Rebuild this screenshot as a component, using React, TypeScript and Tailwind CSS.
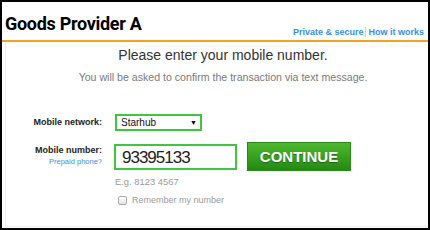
import React from "react";

export default function App() {
  const sans = { fontFamily: '"Liberation Sans", Arial, sans-serif' };
  return (
    <div
      className="w-[430px] h-[230px] border-2 border-black bg-white flex flex-col overflow-hidden"
      style={sans}
    >
      {/* header */}
      <div className="h-[40px] flex items-end justify-between pl-[3px] pr-[4px] border-b-2 border-[#f5a31e] shrink-0">
        <div
          className="text-[18px] font-bold text-black leading-none pb-[7px] tracking-[-0.3px]"
          style={{ fontFamily: 'Roboto, "Liberation Sans", sans-serif' }}
        >
          Goods Provider A
        </div>
        <div className="flex items-center text-[9px] font-bold text-[#3a8ee6] leading-none pb-[3px]">
          <span>Private &amp; secure</span>
          <span className="mx-[2px] w-px h-[10px] bg-[#cfd8e3]" />
          <span>How it works</span>
        </div>
      </div>

      {/* body */}
      <div className="flex-1 flex flex-col border-l border-b border-[#eeeeee] ml-[3px] mb-[1px]">
        <div className="pl-[12px] text-center">
          <div className="text-[14px] leading-[18px] text-[#333] mt-[4px]">
            Please enter your mobile number.
          </div>
          <div className="text-[10.6px] leading-[13px] text-[#7a7a7a] mt-[7px]">
            You will be asked to confirm the transaction via text message.
          </div>
        </div>

        {/* network row */}
        <div className="flex items-center mt-[30px]">
          <div className="w-[96px] text-right text-[9px] font-bold text-[#222]">
            Mobile network:
          </div>
          <div className="ml-[13px] w-[87px] h-[17px] border-2 border-[#3ec73e] flex items-center justify-between pl-[4px] pr-[3px]">
            <span className="text-[10px] text-[#111] leading-none">Starhub</span>
            <span className="text-[7px] text-black leading-none">▼</span>
          </div>
        </div>

        {/* number row */}
        <div className="flex items-start mt-[11px]">
          <div className="w-[96px] flex flex-col items-end pt-[2px]">
            <div className="text-[9px] font-bold text-[#222] leading-[12px]">
              Mobile number:
            </div>
            <div className="text-[7.5px] text-[#3a8ee6] leading-[10px] mt-[1px]">
              Prepaid phone?
            </div>
          </div>
          <div className="ml-[12px] flex flex-col">
            <div className="flex items-center">
              <div className="w-[123px] h-[26px] border-2 border-[#3ec73e] flex items-center pl-[6px] mt-[1px]">
                <span className="text-[17px] text-[#222] leading-none tracking-[-1px]">93395133</span>
              </div>
              <div
                className="ml-[10px] w-[104px] h-[29px] flex items-center justify-center border border-[#2a8a17] bg-gradient-to-b from-[#4db82e] to-[#238a12] text-white text-[15px] font-bold leading-none"
                style={{ textShadow: "0 1px 1px rgba(0,0,0,0.35)" }}
              >
                CONTINUE
              </div>
            </div>
            <div className="text-[9.4px] text-[#9a9a9a] leading-[12px] mt-[5px] ml-[1px]">
              E.g. 8123 4567
            </div>
            <div className="flex items-center mt-[8px] ml-[4px]">
              <div className="w-[9px] h-[9px] rounded-[2px] border border-[#aaa] bg-gradient-to-b from-white to-[#e4e4e4]" />
              <span className="ml-[5px] text-[9px] text-[#9a9a9a] leading-none">
                Remember my number
              </span>
            </div>
          </div>
        </div>
      </div>
    </div>
  );
}
